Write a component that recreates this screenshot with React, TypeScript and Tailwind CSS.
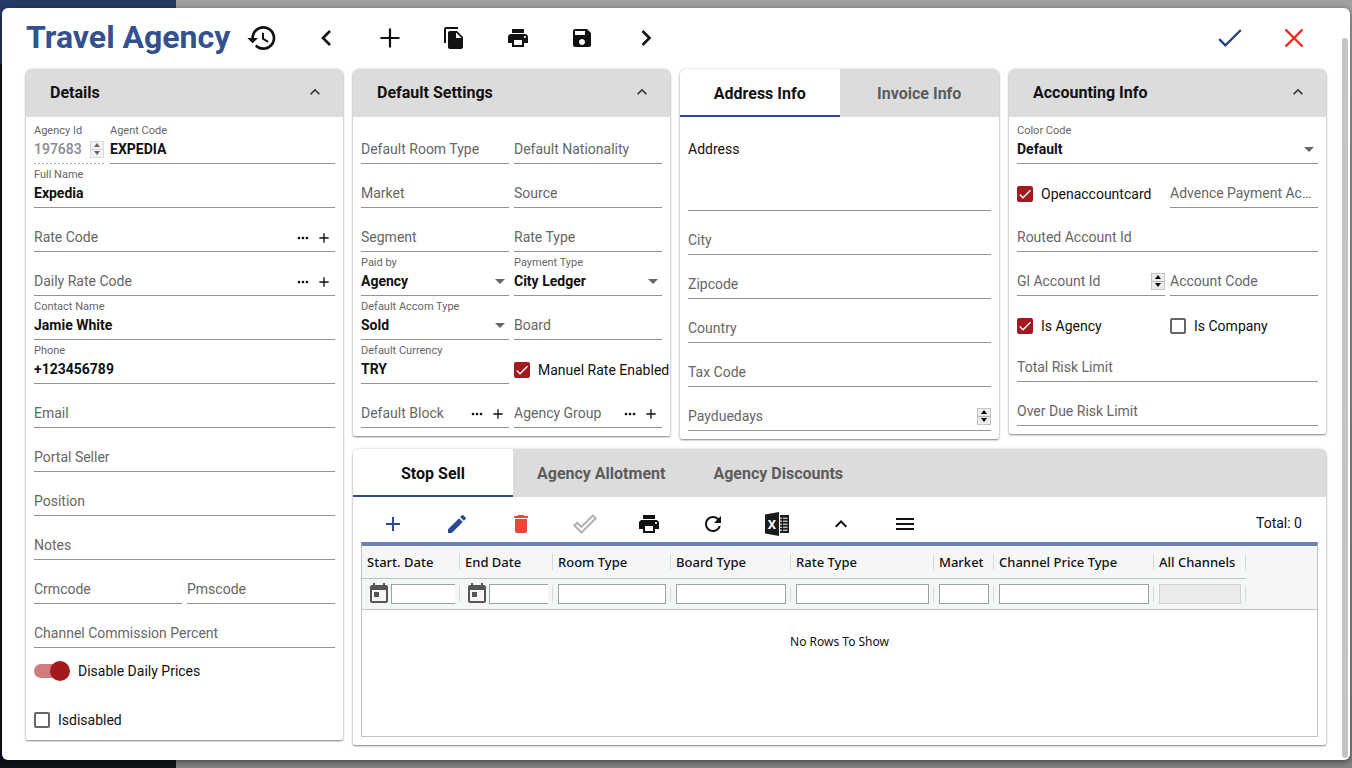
import { useId, useState, type ReactNode } from "react";
import clsx from "clsx";
import {
    MdAdd,
    MdArrowDropDown,
    MdCheck,
    MdDelete,
    MdDoneOutline,
    MdEdit,
    MdExpandLess,
    MdHistory,
    MdMenu,
    MdMoreHoriz,
    MdPrint,
    MdRefresh,
    MdSave,
    MdToday,
} from "react-icons/md";

const columns = [
    { name: "Start. Date", width: "w-[98px]", date: true },
    { name: "End Date", width: "w-[93px]", date: true },
    { name: "Room Type", width: "w-[118px]" },
    { name: "Board Type", width: "w-[120px]" },
    { name: "Rate Type", width: "w-[143px]" },
    { name: "Market", width: "w-[60px]" },
    { name: "Channel Price Type", width: "w-[160px]" },
    { name: "All Channels", width: "w-[92px]", disabled: true },
];

const LineIcon = ({ d, width = 2.4 }: { d: string; width?: number }) => (
    <svg viewBox="0 0 32 32" className="size-8" fill="none" stroke="currentColor" strokeWidth={width} aria-hidden="true">
        <path d={d} />
    </svg>
);

const CopyIcon = () => (
    <svg viewBox="0 0 24 24" className="size-6" fill="currentColor" aria-hidden="true">
        <path d="M16 1H4c-1.1 0-2 .9-2 2v14h2V3h12V1zm-1 4l6 6v10c0 1.1-.9 2-2 2H7.99C6.89 23 6 22.1 6 21l.01-14c0-1.1.89-2 1.99-2h7zm-1 7h5.5L14 6.5V12z" />
    </svg>
);

const ExcelIcon = () => (
    <svg viewBox="0 0 24 24" className="size-6" aria-hidden="true">
        <path d="M0 2.6 14 0v24L0 21.4z" fill="#1b1b1b" />
        <path d="M15 3h9v18h-9z" fill="#1b1b1b" />
        <path
            d="M15 6.2h2M15 9.2h2M15 12.2h2M15 15.2h2M15 18.2h2M18 6.2h4.5M18 9.2h4.5M18 12.2h4.5M18 15.2h4.5M18 18.2h4.5"
            stroke="#fff"
            strokeWidth="1"
        />
        <text x="7" y="16.5" textAnchor="middle" fontSize="13" fontWeight="700" fill="#fff">
            X
        </text>
    </svg>
);

const IconButton = ({ label, className, children }: { label: string; className?: string; children: ReactNode }) => (
    <button type="button" aria-label={label} className={clsx("flex w-16 shrink-0 items-center justify-center", className)}>
        {children}
    </button>
);

const Spinner = ({ disabled }: { disabled?: boolean }) => (
    <span
        className={clsx(
            "flex h-[17px] w-3.5 shrink-0 flex-col border border-[#c4c4c4] bg-[#ececec]",
            disabled && "opacity-60",
        )}
    >
        <button type="button" aria-label="Increase" disabled={disabled} className="flex flex-1 items-center justify-center border-b border-[#b5b5b5]">
            <svg viewBox="0 0 6 4" className="h-1 w-1.5">
                <path d="M0 4 3 0l3 4z" />
            </svg>
        </button>
        <button type="button" aria-label="Decrease" disabled={disabled} className="flex flex-1 items-center justify-center">
            <svg viewBox="0 0 6 4" className="h-1 w-1.5">
                <path d="M0 0h6L3 4z" />
            </svg>
        </button>
    </span>
);

type FieldProps = {
    label: string;
    value?: string;
    options?: string[];
    lookup?: boolean;
    spinner?: boolean;
    disabled?: boolean;
    className?: string;
};

const Field = ({ label, value, options, lookup, spinner, disabled, className }: FieldProps) => {
    const id = useId();

    return (
        <div
            className={clsx(
                "flex h-11 min-w-0 flex-col",
                disabled
                    ? "bg-[repeating-linear-gradient(to_right,#aaa_0_2px,transparent_2px_4px)] bg-size-[100%_1px] bg-bottom bg-no-repeat pb-px"
                    : "border-b border-[#949494]",
                className,
            )}
        >
            <div className="h-4 text-[11px] leading-[22px] text-[#666]">
                {value && <label htmlFor={id} className="block whitespace-nowrap">{label}</label>}
            </div>
            <div className="flex min-w-0 flex-1 items-center pb-px">
                {!value && (
                    <label htmlFor={id} className="min-w-0 truncate text-[#666]">
                        {label}
                    </label>
                )}
                {options ? (
                    <>
                        <select id={id} defaultValue={value} className="w-0 flex-1 appearance-none bg-transparent font-bold outline-none">
                            {options.map((option) => (
                                <option key={option}>{option}</option>
                            ))}
                        </select>
                        <MdArrowDropDown className="pointer-events-none -mr-[3px] size-6 shrink-0 text-[#666]" />
                    </>
                ) : (
                    <input
                        id={id}
                        type="text"
                        defaultValue={value}
                        disabled={disabled}
                        className={clsx(
                            "w-0 flex-1 bg-transparent outline-none",
                            disabled ? "font-medium text-[#8c8c8c]" : "font-bold",
                        )}
                    />
                )}
                {lookup && (
                    <div className="flex gap-[5px] pt-px pr-[3px]">
                        <button type="button" aria-label={`Search ${label}`}>
                            <MdMoreHoriz className="size-4" />
                        </button>
                        <button type="button" aria-label={`Add ${label}`}>
                            <MdAdd className="size-4" />
                        </button>
                    </div>
                )}
                {spinner && <Spinner disabled={disabled} />}
            </div>
        </div>
    );
};

const Checkbox = ({ label, checked, className }: { label: string; checked?: boolean; className?: string }) => (
    <label className={clsx("flex min-w-0 items-center gap-2 whitespace-nowrap", className)}>
        <span className="grid size-4 shrink-0">
            <input
                type="checkbox"
                defaultChecked={checked}
                className="peer col-start-1 row-start-1 size-4 appearance-none rounded-xs border-2 border-[#666] checked:border-[#a3191d] checked:bg-[#a3191d]"
            />
            <MdCheck className="pointer-events-none invisible col-start-1 row-start-1 size-4 text-white peer-checked:visible" />
        </span>
        {label}
    </label>
);

const Row = ({ children }: { children: ReactNode }) => <div className="grid grid-cols-2 gap-[5px]">{children}</div>;

const Card = ({ children, className }: { children: ReactNode; className?: string }) => (
    <section
        className={clsx(
            "min-w-0 rounded-t-md rounded-b-xs bg-white shadow-[0_1px_2px_rgba(0,0,0,0.45),0_0_3px_rgba(0,0,0,0.15)]",
            className,
        )}
    >
        {children}
    </section>
);

const CardHeader = ({ title }: { title: string }) => (
    <header className="flex h-12 items-center justify-between rounded-t-md bg-[#dcdcdc] pr-[18px] pl-6">
        <h2 className="text-base font-bold">{title}</h2>
        <button type="button" aria-label={`Collapse ${title}`} className="pb-0.5">
            <MdExpandLess className="size-5 text-[#333]" />
        </button>
    </header>
);

const Tabs = ({ names, fill }: { names: string[]; fill?: boolean }) => {
    const [active, setActive] = useState(names[0]);

    return (
        <div role="tablist" className="flex h-12 overflow-hidden rounded-t-md bg-[#dcdcdc]">
            {names.map((name) => (
                <button
                    key={name}
                    type="button"
                    role="tab"
                    aria-selected={name === active}
                    onClick={() => setActive(name)}
                    className={clsx(
                        "border-b-2 px-6 pt-[3px] text-base font-bold",
                        fill ? "flex-1" : "min-w-40",
                        name === active ? "border-b-[#2c4a94] bg-white" : "border-b-transparent text-[#5c5c5c]",
                    )}
                >
                    {name}
                </button>
            ))}
        </div>
    );
};

const Details = () => (
    <Card className="row-span-2">
        <CardHeader title="Details" />
        <div className="px-2 pt-[3px] pb-2">
            <div className="flex gap-1.5">
                <Field label="Agency Id" value="197683" spinner disabled className="w-[70px]" />
                <Field label="Agent Code" value="EXPEDIA" className="flex-1" />
            </div>
            <Field label="Full Name" value="Expedia" />
            <Field label="Rate Code" lookup />
            <Field label="Daily Rate Code" lookup />
            <Field label="Contact Name" value="Jamie White" />
            <Field label="Phone" value="+123456789" />
            <Field label="Email" />
            <Field label="Portal Seller" />
            <Field label="Position" />
            <Field label="Notes" />
            <Row>
                <Field label="Crmcode" />
                <Field label="Pmscode" />
            </Row>
            <Field label="Channel Commission Percent" />
            <label className="flex h-12 items-center gap-2 pb-0.5">
                <span className="grid w-9 items-center">
                    <input
                        type="checkbox"
                        role="switch"
                        defaultChecked
                        className="peer col-start-1 row-start-1 h-3.5 w-[34px] appearance-none rounded-full bg-gray-300 checked:bg-[#d07c7f]"
                    />
                    <span className="pointer-events-none col-start-1 row-start-1 size-5 rounded-full bg-gray-500 peer-checked:justify-self-end peer-checked:bg-[#a3191d]" />
                </span>
                Disable Daily Prices
            </label>
            <Checkbox label="Isdisabled" className="h-9 pt-3" />
        </div>
    </Card>
);

const DefaultSettings = () => (
    <Card>
        <CardHeader title="Default Settings" />
        <div className="px-2 pt-[3px] pb-2">
            <Row>
                <Field label="Default Room Type" />
                <Field label="Default Nationality" />
            </Row>
            <Row>
                <Field label="Market" />
                <Field label="Source" />
            </Row>
            <Row>
                <Field label="Segment" />
                <Field label="Rate Type" />
            </Row>
            <Row>
                <Field label="Paid by" value="Agency" options={["Agency", "Guest"]} />
                <Field label="Payment Type" value="City Ledger" options={["City Ledger", "Cash"]} />
            </Row>
            <Row>
                <Field label="Default Accom Type" value="Sold" options={["Sold", "House Use"]} />
                <Field label="Board" />
            </Row>
            <Row>
                <Field label="Default Currency" value="TRY" />
                <Checkbox label="Manuel Rate Enabled" checked className="h-11 pt-4" />
            </Row>
            <Row>
                <Field label="Default Block" lookup />
                <Field label="Agency Group" lookup />
            </Row>
        </div>
    </Card>
);

const AddressInfo = () => (
    <Card>
        <Tabs names={["Address Info", "Invoice Info"]} fill />
        <div className="px-2 pt-[3px] pb-2">
            <div className="flex h-[91px] flex-col border-b border-[#949494] pt-5">
                <label htmlFor="address" className="leading-[18px]">Address</label>
                <textarea id="address" className="w-full flex-1 resize-none outline-none" />
            </div>
            <Field label="City" />
            <Field label="Zipcode" />
            <Field label="Country" />
            <Field label="Tax Code" />
            <Field label="Payduedays" spinner />
        </div>
    </Card>
);

const AccountingInfo = () => (
    <Card>
        <CardHeader title="Accounting Info" />
        <div className="px-2 pt-[3px] pb-2">
            <Field label="Color Code" value="Default" options={["Default", "Red", "Green"]} />
            <Row>
                <Checkbox label="Openaccountcard" checked className="h-11 pt-4" />
                <Field label="Advence Payment Account" />
            </Row>
            <Field label="Routed Account Id" />
            <Row>
                <Field label="Gl Account Id" spinner />
                <Field label="Account Code" />
            </Row>
            <Row>
                <Checkbox label="Is Agency" checked className="h-[42px] pt-[18px]" />
                <Checkbox label="Is Company" className="h-[42px] pt-[18px]" />
            </Row>
            <Field label="Total Risk Limit" />
            <Field label="Over Due Risk Limit" />
        </div>
    </Card>
);

const StopSell = () => (
    <Card className="col-span-3">
        <Tabs names={["Stop Sell", "Agency Allotment", "Agency Discounts"]} />
        <div className="px-2 pb-2">
            <div className="flex h-[45px] items-center pt-2">
                <div className="flex flex-1">
                    <IconButton label="Add row" className="text-[#2c4a94]"><MdAdd className="size-6" /></IconButton>
                    <IconButton label="Edit row" className="text-[#2c4a94]"><MdEdit className="size-6" /></IconButton>
                    <IconButton label="Delete row" className="text-[#f44336]"><MdDelete className="size-6" /></IconButton>
                    <IconButton label="Apply" className="text-[#b0b0b0]"><MdDoneOutline className="size-6" /></IconButton>
                    <IconButton label="Print list"><MdPrint className="size-6" /></IconButton>
                    <IconButton label="Refresh"><MdRefresh className="size-6" /></IconButton>
                    <IconButton label="Export to Excel"><ExcelIcon /></IconButton>
                    <IconButton label="Collapse list"><MdExpandLess className="size-6" /></IconButton>
                    <IconButton label="Menu"><MdMenu className="size-6" /></IconButton>
                </div>
                <span className="pr-4 pb-0.5">Total: 0</span>
            </div>
            <div className="border border-t-4 border-[#bdc3c7] border-t-[#6f80b6] font-['Noto_Sans',sans-serif] text-[13px]">
                <table className="w-full table-fixed border-collapse">
                    <thead className="bg-[#f5f7f7]">
                        <tr>
                            {columns.map(({ name, width }) => (
                                <th key={name} className={clsx("h-8 border-b border-[#bdc3c7] p-0 text-left font-medium", width)}>
                                    <div className="flex h-4 items-center border-r border-[#d5dadc] pt-0.5 pl-[5px] whitespace-nowrap">{name}</div>
                                </th>
                            ))}
                            <th className="p-0" />
                        </tr>
                        <tr className="border-b border-[#bdc3c7]">
                            {columns.map(({ name, date, disabled }) => (
                                <td key={name} className="h-[31px] p-0">
                                    <div className="flex h-4 items-center border-r border-[#d5dadc] pr-1 pl-[5px]">
                                        {date && (
                                            <button type="button" aria-label={`Pick ${name}`} className="shrink-0">
                                                <MdToday className="size-6 text-[#555]" />
                                            </button>
                                        )}
                                        <input
                                            type="text"
                                            aria-label={`Filter ${name}`}
                                            disabled={disabled}
                                            className={clsx(
                                                "h-5 w-full min-w-0 border outline-none",
                                                date && "border-r-0",
                                                disabled ? "border-[#d0d3d4] bg-[#ebebeb]" : "border-[#95a5a6] bg-white",
                                            )}
                                        />
                                    </div>
                                </td>
                            ))}
                            <td className="p-0" />
                        </tr>
                    </thead>
                    <tbody>
                        <tr>
                            <td colSpan={columns.length + 1} className="h-[127px] p-0 pt-6 text-center align-top text-xs">
                                No Rows To Show
                            </td>
                        </tr>
                    </tbody>
                </table>
            </div>
        </div>
    </Card>
);

const Toolbar = () => (
    <header className="flex h-15 items-center">
        <h1 className="text-[32px] font-bold text-[#34518f]">Travel Agency</h1>
        <div className="flex flex-1 items-center">
            <IconButton label="History"><MdHistory className="size-8" /></IconButton>
            <IconButton label="Previous"><LineIcon d="M20 9l-7 7 7 7" width={2.6} /></IconButton>
            <IconButton label="New"><LineIcon d="M16 6.5v19M6.5 16h19" width={2.2} /></IconButton>
            <IconButton label="Copy"><CopyIcon /></IconButton>
            <IconButton label="Print"><MdPrint className="size-6" /></IconButton>
            <IconButton label="Save"><MdSave className="size-6" /></IconButton>
            <IconButton label="Next"><LineIcon d="M12.5 9l7 7-7 7" width={2.6} /></IconButton>
        </div>
        <IconButton label="Confirm" className="text-[#24428a]"><LineIcon d="M5.2 17.2l6.2 6.2L26.8 8" /></IconButton>
        <IconButton label="Close" className="text-[#f5261b]"><LineIcon d="M7.5 7.5l17 17M24.5 7.5l-17 17" /></IconButton>
    </header>
);

const App = () => {
    return (
        <div className="relative min-h-screen px-0.5 py-2 font-[Roboto,sans-serif] text-sm text-[#111]">
            {/* dimmed application behind the dialog */}
            <div className="absolute inset-0 flex" aria-hidden="true">
                <div className="w-44 bg-[#10121c]">
                    <div className="h-16 bg-[#273a66]" />
                </div>
                <div className="flex-1 bg-linear-to-b from-[#a0a0a0] to-[#858585]" />
            </div>
            <main role="dialog" aria-label="Travel Agency" className="relative rounded-md bg-white px-6 pb-[15px] shadow-[0_2px_6px_rgba(0,0,0,0.5)]">
                <Toolbar />
                <div className="grid grid-cols-[317fr_317fr_319fr_317fr] items-start gap-2.5 pt-px">
                    <Details />
                    <DefaultSettings />
                    <AddressInfo />
                    <AccountingInfo />
                    <StopSell />
                </div>
                <div className="absolute top-[30px] right-0.5 bottom-0.5 w-1.5 rounded-full bg-[#c4c4c4]" />
            </main>
        </div>
    );
};

export default App;
